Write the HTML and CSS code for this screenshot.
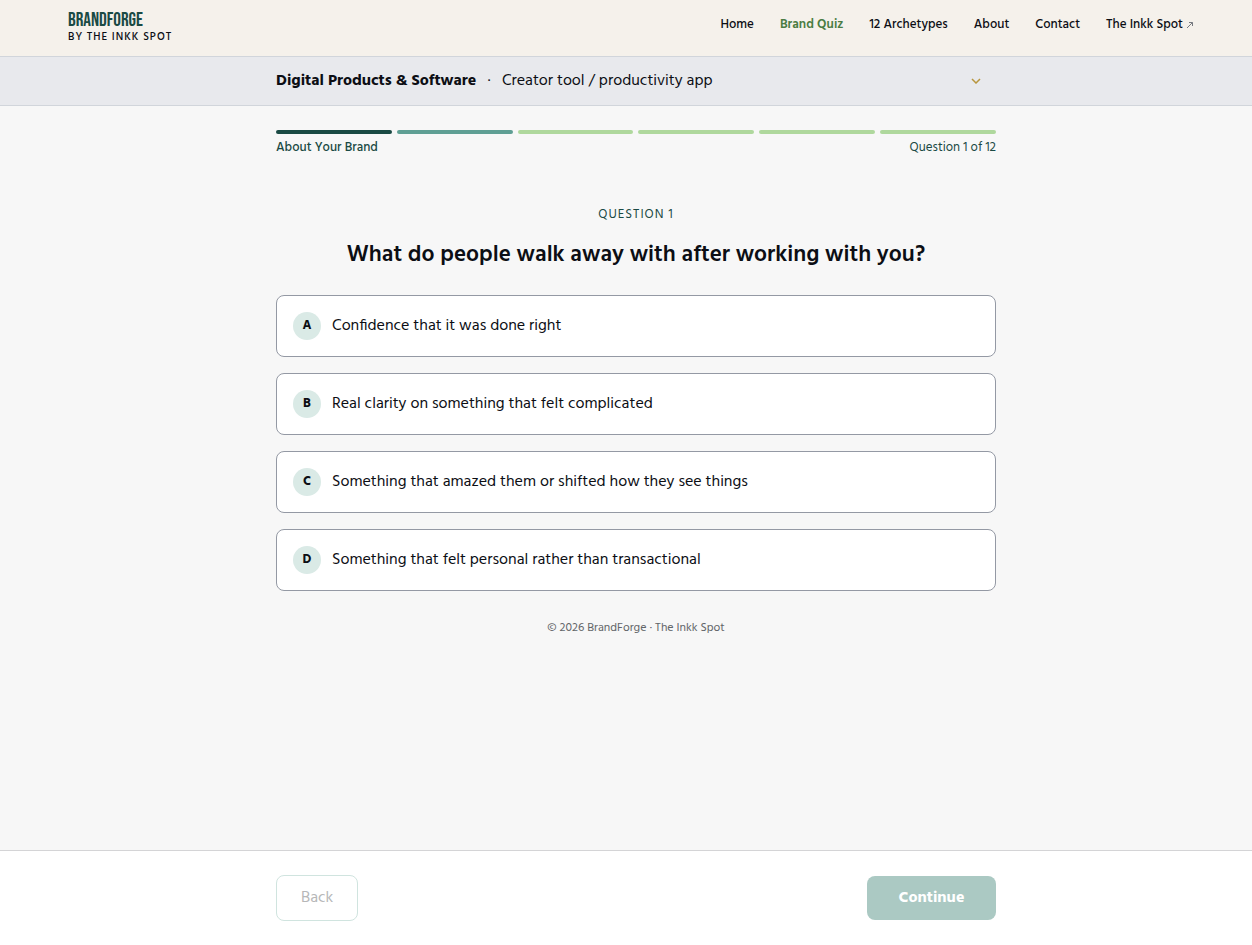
FILE: index.html
```html
<!DOCTYPE html>
<html lang="en">
<head>
<meta charset="utf-8">
<meta name="viewport" content="width=device-width, initial-scale=1">
<title>BrandForge – Brand Quiz</title>
<link rel="stylesheet" href="styles.css">
</head>
<body>
<header class="site-header">
  <div class="header-inner">
    <a class="logo" href="#"><span class="logo-name">BRANDFORGE</span><span class="logo-by">BY THE INKK SPOT</span></a>
    <nav class="nav">
      <a href="#">Home</a>
      <a href="#" class="active" aria-current="page">Brand Quiz</a>
      <a href="#">12 Archetypes</a>
      <a href="#">About</a>
      <a href="#">Contact</a>
      <a href="#" class="external">The Inkk Spot<svg viewBox="0 0 8 8" width="8" height="8" aria-hidden="true"><path d="M1 7 6.500 1.500M3 1.500H6.500V5"/></svg></a>
    </nav>
  </div>
</header>
<div class="context">
  <button class="container context-toggle" type="button" aria-expanded="false">
    <strong>Digital Products &amp; Software</strong><span class="dot">·</span><span class="context-detail">Creator tool / productivity app</span>
    <svg class="chevron" viewBox="0 0 10 6" width="10" height="6" aria-hidden="true"><path d="M1 1 5 5 9 1"/></svg>
  </button>
</div>
<main class="main">
  <div class="container">
    <div class="progress" aria-hidden="true"><span class="done"></span><span class="current"></span><span></span><span></span><span></span><span></span></div>
    <div class="progress-labels"><span class="section-name">About Your Brand</span><span>Question 1 of 12</span></div>
    <p class="eyebrow">QUESTION 1</p>
    <h1 class="question">What do people walk away with after working with you?</h1>
    <div class="options">
      <button class="option" type="button"><span class="letter">A</span><span>Confidence that it was done right</span></button>
      <button class="option" type="button"><span class="letter">B</span><span>Real clarity on something that felt complicated</span></button>
      <button class="option" type="button"><span class="letter">C</span><span>Something that amazed them or shifted how they see things</span></button>
      <button class="option" type="button"><span class="letter">D</span><span>Something that felt personal rather than transactional</span></button>
    </div>
    <p class="copyright">© 2026 BrandForge · The Inkk Spot</p>
  </div>
</main>
<footer class="actions">
  <div class="container actions-inner">
    <button class="back" type="button" disabled>Back</button>
    <button class="continue" type="button" disabled>Continue</button>
  </div>
</footer>
</body>
</html>
```
FILE: styles.css
```css
* { box-sizing: border-box; }

body {
  margin: 0;
  min-height: 100vh;
  display: flex;
  flex-direction: column;
  background: #f7f7f7;
  color: #0c0e14;
  font-family: Hind, "Noto Sans", sans-serif;
  font-size: 16px;
  line-height: 24px;
}

button {
  font: inherit;
  color: inherit;
  cursor: pointer;
}

a { color: inherit; text-decoration: none; }

.container {
  width: 100%;
  max-width: 720px;
  margin: 0 auto;
}

.site-header {
  background: #f5f1eb;
  border-bottom: 1px solid #d1d5db;
}

.header-inner {
  display: flex;
  justify-content: space-between;
  align-items: center;
  padding: 12px 58px 12px 68px;
}

.logo { display: flex; flex-direction: column; }

.logo-name {
  font-family: "Bebas Neue", "Liberation Sans Narrow", "Roboto Condensed", sans-serif;
  font-weight: 400;
  font-size: 19px;
  line-height: 18px;
  color: #1a4a44;
}

.logo-by {
  font-size: 11px;
  line-height: 14px;
  font-weight: 500;
  letter-spacing: 1px;
}

.nav {
  display: flex;
  gap: 26px;
  font-size: 13px;
  line-height: 16px;
  font-weight: 500;
  padding-bottom: 6px;
}

.nav .active { color: #4a7c43; font-weight: 600; }

.external { display: flex; align-items: center; gap: 3px; }

.external svg, .chevron { fill: none; stroke: #777a80; stroke-width: 1; }

.context {
  background: #e8e9ed;
  border-bottom: 1px solid #d1d5db;
  padding-left: 20px;
}

.context-toggle {
  display: flex;
  align-items: center;
  border: 0;
  padding: 12px 15px 12px 0;
  background: none;
  text-align: left;
}

.dot { padding: 0 11px; }

.chevron { margin-left: auto; stroke: #b8963e; stroke-width: 1.500; }

.main { flex: 1; padding: 24px 0 24px 20px; }

.progress { display: flex; gap: 5px; }

.progress span {
  flex: 1;
  height: 4px;
  border-radius: 2px;
  background: #afd89d;
}

.progress .done { background: #1a4a44; }
.progress .current { background: #5f9f94; }

.progress-labels {
  display: flex;
  justify-content: space-between;
  margin-top: 5px;
  font-size: 13px;
  line-height: 18px;
  color: #1a4a44;
}

.section-name { font-weight: 500; }

.eyebrow {
  margin: 48px 0 0;
  text-align: center;
  font-size: 13px;
  line-height: 20px;
  letter-spacing: 1px;
  color: #1a4a44;
}

.question {
  margin: 15px 0 0;
  text-align: center;
  font-size: 23px;
  line-height: 32px;
  font-weight: 600;
}

.options {
  display: flex;
  flex-direction: column;
  gap: 16px;
  margin-top: 23px;
}

.option {
  display: flex;
  align-items: center;
  gap: 11px;
  min-height: 62px;
  padding: 14px 16px;
  border: 1px solid #9499a4;
  border-radius: 8px;
  background: #fff;
  text-align: left;
}

.letter {
  flex: none;
  width: 28px;
  height: 28px;
  border-radius: 50%;
  background: #daeae6;
  text-align: center;
  font-size: 13px;
  line-height: 28px;
  font-weight: 700;
}

.copyright {
  margin: 29px 0 0;
  text-align: center;
  font-size: 12px;
  line-height: 16px;
  color: #626568;
}

.actions {
  background: #fff;
  border-top: 1px solid #d4d4d6;
  padding: 24px 0 24px 20px;
}

.actions-inner {
  display: flex;
  justify-content: space-between;
  align-items: center;
}

.back, .continue {
  border-radius: 8px;
  padding: 10px 24px;
  cursor: default;
}

.back {
  min-width: 82px;
  border: 1px solid #d0e4df;
  background: #fff;
  color: #b6b7b8;
}

.continue {
  min-width: 129px;
  border: 0;
  background: #abc9c3;
  color: #fff;
  font-weight: 700;
}
```
